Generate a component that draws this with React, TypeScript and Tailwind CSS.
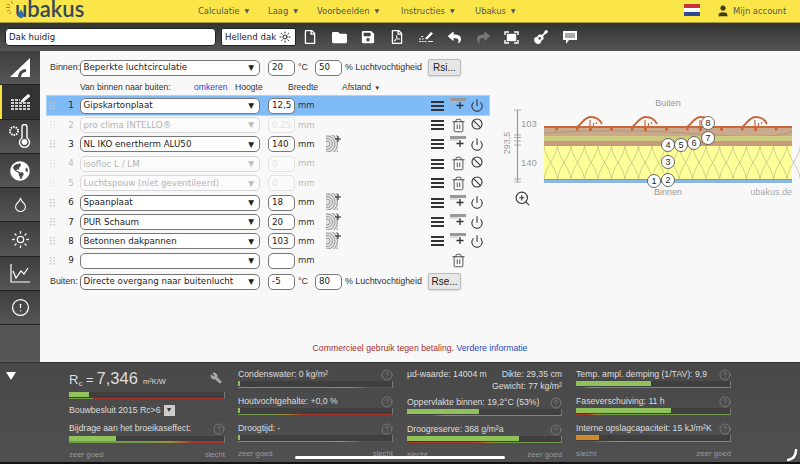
import React from 'react'
import { Ban, CircleAlert, CircleHelp, Droplet, Power, Sun, Trash2, User, Wrench, ZoomIn } from 'lucide-react'
import { FaFolder, FaGlobeAmericas, FaGuitar, FaRegFile, FaRegFilePdf, FaReply, FaSave, FaShare } from 'react-icons/fa'

const VERDANA = "font-['DejaVu_Sans',sans-serif]"
const HELV = "font-['Liberation_Sans',Arial,sans-serif]"

function NavItem({ label, className }: { label: string; className: string }) {
  return (
    <span className={className}>
      {label}
      <span className="text-[6px] ml-[5px] align-[1px]">▼</span>
    </span>
  )
}

function Select({ value, off, className = 'w-[180px]' }: { value: string; off?: boolean; className?: string }) {
  return (
    <div
      className={`${className} h-[16px] shrink-0 flex items-center justify-between pl-[2.5px] pr-[5px] rounded-[5px] border text-[8.7px] leading-none ${VERDANA} ${
        off ? 'border-[#d8d8d8] text-[#b4b4b4] bg-[#fbfbfb]' : 'border-[#777] text-[#222] bg-white'
      }`}
    >
      <span className="whitespace-nowrap">{value}</span>
      <span className={`text-[7.5px] ${off ? 'text-[#bbb]' : 'text-[#222]'}`}>▼</span>
    </div>
  )
}

function Num({ value, off, className = 'w-[27px]' }: { value: string; off?: boolean; className?: string }) {
  return (
    <div
      className={`${className} h-[16px] shrink-0 flex items-center pl-[3px] rounded-[5px] border text-[8.7px] leading-none ${VERDANA} ${
        off ? 'border-[#e2e2e2] text-[#e4e4e4] bg-[#fafafa]' : 'border-[#777] text-[#222] bg-white'
      }`}
    >
      {value}
    </div>
  )
}

function Grip({ off }: { off?: boolean }) {
  return (
    <svg width="5" height="8" viewBox="0 0 5 8" className={off ? 'text-[#e4e4e4]' : 'text-[#c4c4c4]'}>
      {[0, 3, 6].map((y) => (
        <g key={y} fill="currentColor">
          <rect x="0" y={y} width="1.5" height="1.5" />
          <rect x="3.5" y={y} width="1.5" height="1.5" />
        </g>
      ))}
    </svg>
  )
}

function Burger() {
  return (
    <div className="w-[13px] flex flex-col gap-[2px]">
      <div className="h-[2px] bg-[#333]" />
      <div className="h-[2px] bg-[#333]" />
      <div className="h-[2px] bg-[#333]" />
    </div>
  )
}

function AddLayer() {
  return (
    <svg width="16" height="13" viewBox="0 0 16 13" className="-mt-[3px]">
      <rect x="0" y="0" width="16" height="3" fill="#999" />
      <path d="M0 4h8" stroke="#bbb" />
      <path d="M10 4v7M6.500 7.500h7" stroke="#333" strokeWidth="1.3" />
    </svg>
  )
}

function Grain() {
  return (
    <svg width="15" height="17" viewBox="0 0 15 17" className="-mt-[2px]">
      <rect x="0" y="0" width="12" height="17" fill="#e2e2e2" />
      <clipPath id="g">
        <rect x="0" y="0" width="12" height="17" />
      </clipPath>
      <g clipPath="url(#g)">
        {[3, 5.5, 8, 10.5, 13].map((r) => (
          <circle key={r} cx="1" cy="9" r={r} fill="none" stroke="#888" strokeWidth="0.8" />
        ))}
      </g>
      <path d="M12 1v6M9 4h6" stroke="#222" strokeWidth="1" />
    </svg>
  )
}

type Layer = { n: number; name: string; h: string; off?: boolean; grain?: boolean; empty?: boolean; active?: boolean }

const layers: Layer[] = [
  { n: 1, name: 'Gipskartonplaat', h: '12,5', active: true },
  { n: 2, name: 'pro clima INTELLO®', h: '0,25', off: true },
  { n: 3, name: 'NL IKO enertherm ALU50', h: '140', grain: true },
  { n: 4, name: 'isofloc L / LM', h: '0', off: true },
  { n: 5, name: 'Luchtspouw (niet geventileerd)', h: '0', off: true },
  { n: 6, name: 'Spaanplaat', h: '18', grain: true },
  { n: 7, name: 'PUR Schaum', h: '20', grain: true },
  { n: 8, name: 'Betonnen dakpannen', h: '103', grain: true },
  { n: 9, name: '', h: '', empty: true },
]

function LayerRow({ l }: { l: Layer }) {
  return (
    <div className={`h-[19.4px] w-[442px] flex items-center ${l.active ? 'bg-[#7fbcf7] outline outline-[#a9d3fa]' : ''}`}>
      <div className="w-[15px] pl-[3px] flex items-center">
        <Grip off={l.off} />
      </div>
      <div className={`w-[18px] text-center text-[8.7px] ${VERDANA} ${l.off ? 'text-[#bbb]' : 'text-[#222]'}`}>{l.n}</div>
      <Select value={l.name} off={l.off} />
      <div className="w-[8px]" />
      <Num value={l.h} off={l.off} />
      <span className={`ml-[3px] w-[28px] text-[8.5px] ${VERDANA} ${l.off ? 'text-[#bbb]' : 'text-[#333]'}`}>mm</span>
      <div className="w-[15px] flex items-center">{l.grain && <Grain />}</div>
      <div className="w-[90px]" />
      {l.empty ? <div className="w-[13px]" /> : <Burger />}
      <div className="w-[6px]" />
      <div className="w-[16px] flex justify-center">
        {l.off || l.empty ? <Trash2 size={15} strokeWidth={1.3} className="text-[#333]" /> : <AddLayer />}
      </div>
      <div className="w-[4px]" />
      <div className="w-[14px] flex justify-center">
        {l.empty ? null : l.off ? (
          <Ban size={12} strokeWidth={2.2} className="text-[#333] -mt-[3px]" />
        ) : (
          <Power size={15} strokeWidth={1.7} className="text-[#222]" />
        )}
      </div>
    </div>
  )
}

function ToolIcon({ children }: { children: React.ReactNode }) {
  return <div className="flex items-center justify-center w-[28.8px] text-white">{children}</div>
}

function SideBtn({ children, active }: { children: React.ReactNode; active?: boolean }) {
  return (
    <div
      className={`h-[34.3px] flex items-center justify-center text-white border-b border-[#222] relative ${
        active ? 'bg-[#333]' : 'bg-linear-to-b from-[#3e3e3e] to-[#565656]'
      }`}
    >
      {active && <div className="absolute left-0 top-0 bottom-0 w-[2px] bg-[#f5e23a]" />}
      {children}
    </div>
  )
}

function Gauge({ w, fill = 'bg-[#8fc25a]', line, className = '' }: { w: number; fill?: string; line: string; className?: string }) {
  return (
    <div className={`h-[7px] bg-[#3f3f3f] border-r border-[#777] flex flex-col justify-between ${className}`}>
      <div className={`h-[5px] ${fill}`} style={{ width: `${w}%` }} />
      <div className={`h-[1.5px] ${line}`} />
    </div>
  )
}

function Metric({ label, w, line, fill, className = '' }: { label: string; w: number; line: string; fill?: string; className?: string }) {
  return (
    <div className={`h-[27px] ${className}`}>
      <div className="h-[15px] flex items-center justify-between">
        <span className="whitespace-nowrap">{label}</span>
        <CircleHelp size={12} strokeWidth={1.1} className="text-[#999]" />
      </div>
      <Gauge w={w} line={line} fill={fill} className="mt-[-1px]" />
    </div>
  )
}

function Legend({ left, right }: { left: string; right: string }) {
  return (
    <div className="flex justify-between text-[7.8px] text-[#999]">
      <span>{left}</span>
      <span>{right}</span>
    </div>
  )
}

function RoofDrawing() {
  const periods = [0, 55, 110, 165]
  const lens: string[] = []
  for (let x = 544; x < 792; x += 13.5) {
    lens.push(`M${x} 179 C${x + 2} 165 ${x + 11} 160 ${x + 13.5} 146 M${x} 146 C${x + 2} 160 ${x + 11} 165 ${x + 13.5} 179`)
  }
  const circles: [number, number, number][] = [
    [654, 181, 1],
    [668, 180, 2],
    [668, 162, 3],
    [668, 145, 4],
    [681, 145, 5],
    [694, 143, 6],
    [708, 138, 7],
    [708, 123, 8],
  ]
  return (
    <svg width="300" height="130" viewBox="500 90 300 130" className={`shrink-0 ${HELV}`}>
      <text x="668" y="106" textAnchor="middle" fontSize="9" fill="#999">Buiten</text>
      <rect x="544" y="128" width="248" height="8" fill="#cba98c" />
      <path d="M544 133 Q620 128 700 134 T792 131" stroke="#a98a6c" strokeWidth="0.6" fill="none" />
      <rect x="544" y="136" width="248" height="5" fill="#cdcb80" />
      <rect x="544" y="141" width="248" height="5" fill="#c9997c" />
      <rect x="544" y="146" width="248" height="33" fill="#ffff99" />
      <path d={lens.join(' ')} stroke="#b0ae80" strokeWidth="0.6" fill="none" />
      <rect x="544" y="179" width="248" height="1" fill="#8899aa" />
      <rect x="544" y="180" width="248" height="3" fill="#8ab6e2" />
      <rect x="544" y="126" width="248" height="2" fill="#c9683c" />
      {periods.map((d) => (
        <g key={d} transform={`translate(${d} 0)`}>
          <path d="M577 127 C582 124 584 117 591 117 C597 117 600 120 602 124" fill="none" stroke="#c9683c" strokeWidth="2" />
          <path d="M590 127 V120 M593.500 127 V123 M596.500 124 V122" fill="none" stroke="#c9683c" strokeWidth="1.2" />
          <rect x="555.500" y="127" width="2.500" height="3.500" fill="#c9683c" />
          <rect x="576" y="127" width="2.500" height="3.500" fill="#c9683c" />
          <rect x="589" y="127" width="3" height="4" fill="#c9683c" />
          <rect x="610" y="127" width="2.500" height="3.500" fill="#c9683c" />
        </g>
      ))}
      <g stroke="#999" fill="none">
        <path d="M517.500 110 V182" strokeWidth="1.2" />
        <path d="M514 110 H521 M514 135 H521 M514 137.500 H521 M514 141 H521 M514 145 H521 M514 179 H521 M514 182 H521" strokeWidth="0.8" />
      </g>
      <text x="521" y="127" fontSize="9.500" fill="#999">103</text>
      <text x="521" y="166" fontSize="9.500" fill="#999">140</text>
      <text x="513" y="146" fontSize="9" fill="#999" textAnchor="middle" transform="rotate(-90 510 146)">293,5</text>
      <text x="668" y="195" textAnchor="middle" fontSize="9" fill="#999">Binnen</text>
      <text x="792" y="195" textAnchor="end" fontSize="9" fill="#aaa">ubakus.de</text>
      {circles.map(([x, y, n]) => (
        <g key={n}>
          <circle cx={x} cy={y} r="6.500" fill="#fff" stroke="#444" strokeWidth="0.8" />
          <text x={x} y={y + 3.200} textAnchor="middle" fontSize="9" fill="#222">{n}</text>
        </g>
      ))}
    </svg>
  )
}

export default function App() {
  return (
    <div className={`relative w-[800px] h-[464px] overflow-hidden flex flex-col bg-[#f8f8f8] ${VERDANA}`}>
      {/* top nav */}
      <header className="h-[23px] shrink-0 bg-[#fbe64a] border-b border-[#a79a2c] flex items-center text-[8.4px] text-[#555]">
        <div className="w-[198px] shrink-0 pl-[5px] flex items-center relative">
          <svg width="12" height="20" viewBox="0 0 12 20" className="shrink-0 -mr-[2px]">
            <path d="M1 6.500h4M2 3l3 1.500M2 10.500l3-1.500M4 13l2-2M6 0l2 3" stroke="#c9703a" strokeWidth="1" />
          </svg>
          <span className="text-[22px] leading-none font-['Lato',sans-serif] text-[#33495a] font-semibold -mt-[5px]">ubakus</span>
          <svg width="6" height="9" viewBox="0 0 6 9" className="absolute left-[18px] top-[8px]">
            <path d="M3 0 C4 3 6 4 6 6 A3 3 0 0 1 0 6 C0 4 2 3 3 0Z" fill="#2a6fb0" />
          </svg>
        </div>
        <NavItem label="Calculatie" className="w-[70px] whitespace-nowrap" />
        <NavItem label="Laag" className="w-[49px] whitespace-nowrap" />
        <NavItem label="Voorbeelden" className="w-[84px] whitespace-nowrap" />
        <NavItem label="Instructies" className="w-[74px] whitespace-nowrap" />
        <NavItem label="Ubakus" className="w-[209px] whitespace-nowrap" />
        <div className="flex flex-col w-[16px] h-[12px] mb-[2px]">
          <div className="flex-1 bg-[#c8323c]" />
          <div className="flex-1 bg-white" />
          <div className="flex-1 bg-[#2a4a94]" />
        </div>
        <User size={14} fill="#3d3a10" strokeWidth={1} className="ml-[16px] text-[#3d3a10]" />
        <span className="ml-[3px] whitespace-nowrap">Mijn account</span>
      </header>

      {/* toolbar */}
      <div className="h-[28px] shrink-0 bg-linear-to-b from-[#333] to-[#555] flex items-center pl-[5px]">
        <div className="w-[211px] h-[18px] rounded-[4px] bg-white border border-[#222] flex items-center pl-[3px] text-[8.6px] text-[#222]">Dak huidig</div>
        <div className="ml-[5px] w-[75px] h-[18px] rounded-[2px] bg-white border border-[#222] flex items-center pl-[3px] text-[8.6px] text-[#222] whitespace-nowrap">
          Hellend dak
          <Sun size={12} className="ml-[3px]" />
        </div>
        <div className="flex items-center">
          <ToolIcon><FaRegFile size={14} /></ToolIcon>
          <ToolIcon><FaFolder size={15} /></ToolIcon>
          <ToolIcon><FaSave size={14} /></ToolIcon>
          <ToolIcon><FaRegFilePdf size={14} /></ToolIcon>
          <ToolIcon>
            <svg width="15" height="12" viewBox="0 0 15 12" fill="white" stroke="white">
              <path d="M1 8h5M1 10.500h8M3 5.500h3" strokeWidth="0.9" strokeDasharray="2 0.7" fill="none" />
              <path d="M7 7.500 L13 1 L15 2.500 L9 8.500 Z" stroke="none" />
              <path d="M10 10.500h5" strokeWidth="0.9" />
            </svg>
          </ToolIcon>
          <ToolIcon><FaReply size={13} /></ToolIcon>
          <ToolIcon><FaShare size={13} className="text-[#777]" /></ToolIcon>
          <ToolIcon>
            <svg width="15" height="13" viewBox="0 0 15 13" fill="none" stroke="white" strokeWidth="1.4">
              <path d="M1 4V1h4M10 1h4v3M14 9v3h-4M5 12H1V9" />
              <rect x="3.500" y="3.500" width="8" height="6" fill="white" />
            </svg>
          </ToolIcon>
          <ToolIcon><FaGuitar size={14} /></ToolIcon>
          <ToolIcon>
            <svg width="14" height="13" viewBox="0 0 14 13">
              <path d="M0 0H14V9H6L3 13V9H0Z" fill="white" />
              <rect x="2" y="2" width="10" height="5" fill="#aaa" />
            </svg>
          </ToolIcon>
        </div>
      </div>

      <div className="h-[311px] shrink-0 flex">
        {/* sidebar */}
        <aside className="w-[40px] shrink-0 flex flex-col bg-[#565656]">
          <SideBtn>
            <svg width="22" height="22" viewBox="0 0 22 22">
              <path d="M21 1 V20 H1 Z" fill="white" />
              <path d="M9 20 A8 8 0 0 1 17 12 V20 Z" fill="#4a4a4a" />
              <path d="M12 20 A5 5 0 0 1 17 15 V20 Z" fill="white" />
            </svg>
          </SideBtn>
          <SideBtn active>
            <svg width="21" height="17" viewBox="0 0 21 17" stroke="white" fill="none">
              <path d="M1 7h9M1 10h20M1 13h20M1 16h20" strokeWidth="1.4" strokeDasharray="3 1" />
              <path d="M11 8 L18 1.500 L20 3 L13 9 Z" fill="white" />
            </svg>
          </SideBtn>
          <SideBtn>
            <svg width="22" height="24" viewBox="0 0 22 24" fill="none" stroke="white">
              <circle cx="5" cy="7" r="4" strokeWidth="2" strokeDasharray="1.500 1" />
              <path d="M13 3a2.500 2.500 0 0 1 5 0v11a5 5 0 1 1-5 0z" strokeWidth="1.4" />
              <circle cx="15.500" cy="18" r="2.500" fill="white" />
            </svg>
          </SideBtn>
          <SideBtn><FaGlobeAmericas size={20} /></SideBtn>
          <SideBtn><Droplet size={17} strokeWidth={1.5} /></SideBtn>
          <SideBtn><Sun size={19} strokeWidth={1.6} /></SideBtn>
          <SideBtn>
            <svg width="20" height="20" viewBox="0 0 20 20" fill="none" stroke="white" strokeWidth="1.2">
              <path d="M1 1V19H20" />
              <path d="M3 8l3 7 5-7 3 3 4-6" />
            </svg>
          </SideBtn>
          <SideBtn><CircleAlert size={19} strokeWidth={1.6} /></SideBtn>
        </aside>

        {/* main */}
        <main className="flex-1 flex flex-col min-w-0">
          <div className="flex-1 flex min-h-0">
            <div className="w-[449px] shrink-0 pl-[7px] pt-[7px]">
              <div className={`h-[19px] flex items-center text-[8.9px] text-[#333] ${HELV}`}>
                <span className="w-[33px] pl-[3px]">Binnen:</span>
                <Select value="Beperkte luchtcirculatie" />
                <div className="w-[8px]" />
                <Num value="20" />
                <span className="ml-[3px] w-[17px]">°C</span>
                <Num value="50" />
                <span className="ml-[3px] w-[83px] whitespace-nowrap">% Luchtvochtigheid</span>
                <div className="w-[33px] h-[17px] rounded-[2px] bg-[#e6e6e6] border border-[#bbb] shadow-sm flex items-center justify-center text-[10px] text-[#222]">Rsi...</div>
              </div>
              <div className={`h-[17px] mt-[2px] flex items-center text-[8.6px] text-[#333] ${HELV}`}>
                <span className="w-[147px] pl-[33px] whitespace-nowrap">Van binnen naar buiten:</span>
                <span className="w-[41px] text-[#3344dd]">omkeren</span>
                <span className="w-[53px]">Hoogte</span>
                <span className="w-[54px]">Breedte</span>
                <span>Afstand<span className="text-[6px] ml-[3px]">▼</span></span>
              </div>
              <div className="flex flex-col">
                {layers.map((l) => (
                  <LayerRow key={l.n} l={l} />
                ))}
              </div>
              <div className={`h-[20px] mt-[1px] flex items-center text-[8.9px] text-[#333] ${HELV}`}>
                <span className="w-[33px] pl-[3px]">Buiten:</span>
                <Select value="Directe overgang naar buitenlucht" />
                <div className="w-[8px]" />
                <Num value="-5" />
                <span className="ml-[3px] w-[17px]">°C</span>
                <Num value="80" />
                <span className="ml-[3px] w-[83px] whitespace-nowrap">% Luchtvochtigheid</span>
                <div className="w-[33px] h-[17px] rounded-[2px] bg-[#e6e6e6] border border-[#bbb] shadow-sm flex items-center justify-center text-[10px] text-[#222]">Rse...</div>
              </div>
            </div>
            <div className="flex-1 relative">
              <div className="pt-[39px] pl-[11px]">
                <RoofDrawing />
              </div>
              <ZoomIn size={17} strokeWidth={1.6} className="absolute left-[25px] top-[139px] text-[#333]" />
            </div>
          </div>
          <div className={`h-[20px] shrink-0 text-center text-[8.7px] ${HELV} text-[#a33030] pr-[0px]`}>
            Commercieel gebruik tegen betaling. <span className="text-[#3344bb]">Verdere informatie</span>
          </div>
        </main>
      </div>

      {/* results footer */}
      <footer className={`flex-1 bg-linear-to-b from-[#484848] to-[#505050] border-t border-[#333] flex text-[8.7px] text-[#ddd] ${HELV}`}>
        <div className="w-[69px] shrink-0 pl-[6px] pt-[9px]">
          <div className="w-0 h-0 border-l-[5px] border-r-[5px] border-t-[8px] border-l-transparent border-r-transparent border-t-white" />
        </div>

        <div className="w-[156px] shrink-0 pt-[5px]">
          <div className="h-[20px] flex items-center justify-between">
            <div className="flex items-baseline whitespace-nowrap">
              <span className="text-[13px]">R<sub className="text-[8px]">c</sub> =</span>
              <span className="text-[16.5px] ml-[3px]">7,346</span>
              <span className="text-[7.5px] ml-[5px]">m²K/W</span>
            </div>
            <Wrench size={12} fill="#aaa" className="text-[#aaa] mr-[3px] -scale-x-100" />
          </div>
          <Gauge w={13} line="bg-linear-to-r from-[#6f9a4a] from-15% to-[#a8342a] to-16%" className="mt-[4px]" />
          <div className="mt-[5px] h-[13px] flex items-center whitespace-nowrap">
            Bouwbesluit 2015 Rc&gt;6
            <span className="ml-[3px] w-[11px] h-[11px] bg-[#ccc] flex items-center justify-center text-[7px] text-[#333]">▼</span>
          </div>
          <Metric className="mt-[4.5px]" label="Bijdrage aan het broeikaseffect:" w={30} line="bg-linear-to-r from-[#6f9a4a] from-50% via-[#a0903a] via-65% to-[#a8342a] to-80%" />
          <Legend left="zeer goed" right="slecht" />
        </div>

        <div className="w-[155px] shrink-0 ml-[13px] pt-[4px]">
          <Metric label="Condenswater: 0 kg/m²" w={1} line="bg-linear-to-r from-[#6f9a4a] from-60% via-[#a0903a] via-72% to-[#a8342a] to-85%" />
          <Metric label="Houtvochtgehalte: +0,0 %" w={1} line="bg-linear-to-r from-[#6f9a4a] from-20% via-[#a0903a] via-30% to-[#a8342a] to-42%" />
          <Metric label="Droogtijd: -" w={1} line="bg-linear-to-r from-[#6f9a4a] from-55% via-[#a0903a] via-68% to-[#a8342a] to-80%" />
          <Legend left="zeer goed" right="slecht" />
        </div>

        <div className="w-[155px] shrink-0 ml-[14px] pt-[6px]">
          <div className="h-[12px] flex items-center justify-between whitespace-nowrap"><span>µd-waarde: 14004 m</span><span>Dikte: 29,35 cm</span></div>
          <div className="h-[12px] flex items-center justify-end">Gewicht: 77 kg/m²</div>
          <Metric className="mt-[2px]" label="Oppervlakte binnen: 19,2°C (53%)" w={47} line="bg-linear-to-r from-[#a8342a] from-15% via-[#a0903a] via-25% to-[#6f9a4a] to-35%" />
          <Metric label="Droogreserve: 368 g/m²a" w={73} line="bg-linear-to-r from-[#a8342a] from-45% via-[#a0903a] via-55% to-[#6f9a4a] to-65%" />
          <Legend left="slecht" right="zeer goed" />
        </div>

        <div className="w-[155px] shrink-0 ml-[14px] pt-[4px]">
          <Metric label="Temp. ampl. demping (1/TAV): 9,9" w={49} line="bg-linear-to-r from-[#a8342a] from-5% via-[#a0903a] via-10% to-[#6f9a4a] to-15%" />
          <Metric label="Faseverschuiving: 11 h" w={62} line="bg-linear-to-r from-[#a8342a] from-8% via-[#a0903a] via-14% to-[#6f9a4a] to-20%" />
          <Metric label="Interne opslagcapaciteit: 15 kJ/m²K" w={15} fill="bg-[#d08a30]" line="bg-linear-to-r from-[#a8342a] from-10% via-[#a0903a] via-25% to-[#6f9a4a] to-40%" />
          <Legend left="slecht" right="zeer goed" />
        </div>
      </footer>

      <div className="h-[2px] shrink-0 bg-[#111]" />
      {/* device overlays */}
      <div className="absolute left-[295px] top-[456px] w-[210px] h-[3px] rounded-full bg-white" />
      <svg width="12" height="14" viewBox="0 0 12 14" className="absolute left-[787px] top-[449px]">
        <path d="M9 1 C9 7 6 10 1 11" stroke="white" strokeWidth="2.500" fill="none" strokeLinecap="round" />
      </svg>
    </div>
  )
}
